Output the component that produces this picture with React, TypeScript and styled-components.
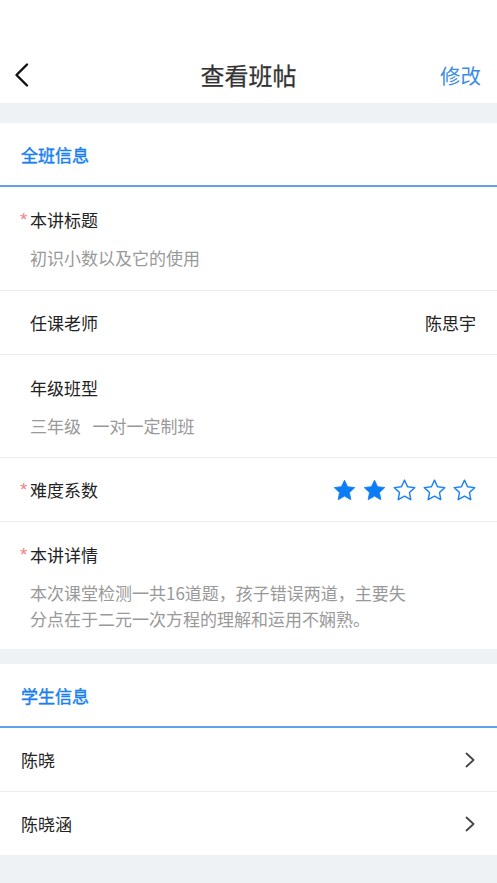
import React from "react";
import styled, { createGlobalStyle } from "styled-components";

const Global = createGlobalStyle`
  html, body { margin: 0; padding: 0; }
  body {
    background: #eff2f5;
    font-family: "Noto Sans CJK SC", "Noto Sans", sans-serif;
    -webkit-font-smoothing: antialiased;
  }
`;

const Page = styled.div`
  width: 497px;
  min-height: 883px;
  background: #eff2f5;
  display: flex;
  flex-direction: column;
`;

const Header = styled.header`
  height: 56px;
  padding-top: 47px;
  background: #fff;
  display: grid;
  grid-template-columns: 80px 1fr 80px;
  align-items: center;
`;

const BackBtn = styled.div`
  padding-left: 13px;
  display: flex;
  align-items: center;
`;

const Title = styled.h1`
  margin: 0;
  text-align: center;
  font-size: 24px;
  font-weight: 400;
  color: #333;
  line-height: 30px;
  -webkit-text-stroke: 0.25px #333;
`;

const EditBtn = styled.div`
  text-align: right;
  padding-right: 16px;
  font-size: 20.5px;
  color: #3a8de3;
  line-height: 30px;
`;

const Band = styled.div<{ $h: number }>`
  height: ${(p) => p.$h}px;
`;

const Card = styled.section`
  background: #fff;
`;

const SectionHead = styled.div`
  height: 62px;
  display: flex;
  align-items: center;
  padding-left: 21px;
  font-size: 17px;
  font-weight: 400;
  color: #1a7ff0;
  -webkit-text-stroke: 0.45px #1a7ff0;
  border-bottom: 2px solid #5ea2ee;
`;

const StackRow = styled.div<{ $pt: number; $pb: number; $gap: number }>`
  padding: ${(p) => p.$pt}px 21px ${(p) => p.$pb}px 21px;
  display: flex;
  flex-direction: column;
  gap: ${(p) => p.$gap}px;
  border-bottom: 1px solid #ececef;
  &:last-child { border-bottom: none; }
`;

const InlineRow = styled.div`
  height: 63px;
  padding: 0 21px;
  display: flex;
  align-items: center;
  justify-content: space-between;
  border-bottom: 1px solid #ececef;
  &:last-child { border-bottom: none; }
`;

const Label = styled.div`
  display: flex;
  align-items: center;
  font-size: 17px;
  line-height: 24px;
  color: #222;
`;

const Star = styled.span`
  width: 9px;
  height: 24px;
  color: #f08585;
  font-family: "Liberation Sans", sans-serif;
  font-size: 19px;
  line-height: 24px;
  margin-left: -1px;
  margin-right: 1px;
`;

const Pad = styled.span`
  width: 9px;
`;

const Value = styled.div<{ $lh: number }>`
  padding-left: 9px;
  font-size: 17px;
  line-height: ${(p) => p.$lh}px;
  color: #999;
  max-width: 385px;
  white-space: pre-wrap;
`;

const RightText = styled.div`
  font-size: 17px;
  color: #222;
`;

const Stars = styled.div`
  display: flex;
  gap: 7px;
`;

const Name = styled.div`
  font-size: 17px;
  color: #222;
`;

const StarIcon = ({ filled }: { filled: boolean }) => (
  <svg width="23" height="22" viewBox="0 0 24 23">
    <path
      d="M12 1.2l3.2 6.9 7.5.9-5.5 5.2 1.4 7.4L12 17.9l-6.6 3.7 1.4-7.4L1.3 9l7.5-.9z"
      fill={filled ? "#0a7cf5" : "none"}
      stroke="#1b82f2"
      strokeWidth={filled ? 1 : 1.5}
      strokeLinejoin="round"
    />
  </svg>
);

const Chevron = () => (
  <svg width="12" height="16" viewBox="0 0 12 16">
    <path d="M2.5 1.5l7 6.5-7 6.5" fill="none" stroke="#444" strokeWidth="1.8" strokeLinecap="round" strokeLinejoin="round" />
  </svg>
);

const BackIcon = () => (
  <svg width="18" height="26" viewBox="0 0 18 26">
    <path d="M14 2.5L3.5 13 14 23.5" fill="none" stroke="#111" strokeWidth="2.4" strokeLinecap="round" strokeLinejoin="round" />
  </svg>
);

export default function App() {
  return (
    <>
      <Global />
      <Page>
        <Header>
          <BackBtn>
            <BackIcon />
          </BackBtn>
          <Title>查看班帖</Title>
          <EditBtn>修改</EditBtn>
        </Header>
        <Band $h={20} />
        <Card>
          <SectionHead>全班信息</SectionHead>
          <StackRow $pt={21} $pb={20} $gap={14}>
            <Label><Star>*</Star>本讲标题</Label>
            <Value $lh={24}>初识小数以及它的使用</Value>
          </StackRow>
          <InlineRow>
            <Label><Pad />任课老师</Label>
            <RightText>陈思宇</RightText>
          </InlineRow>
          <StackRow $pt={21} $pb={19} $gap={14}>
            <Label><Pad />年级班型</Label>
            <Value $lh={24}>{"三年级   一对一定制班"}</Value>
          </StackRow>
          <InlineRow>
            <Label><Star>*</Star>难度系数</Label>
            <Stars>
              {[true, true, false, false, false].map((f, i) => (
                <StarIcon key={i} filled={f} />
              ))}
            </Stars>
          </InlineRow>
          <StackRow $pt={21} $pb={17} $gap={13}>
            <Label><Star>*</Star>本讲详情</Label>
            <Value $lh={26}>本次课堂检测一共16道题，孩子错误两道，主要失分点在于二元一次方程的理解和运用不娴熟。</Value>
          </StackRow>
        </Card>
        <Band $h={15} />
        <Card>
          <SectionHead>学生信息</SectionHead>
          <InlineRow>
            <Name>陈晓</Name>
            <Chevron />
          </InlineRow>
          <InlineRow>
            <Name>陈晓涵</Name>
            <Chevron />
          </InlineRow>
        </Card>
      </Page>
    </>
  );
}
